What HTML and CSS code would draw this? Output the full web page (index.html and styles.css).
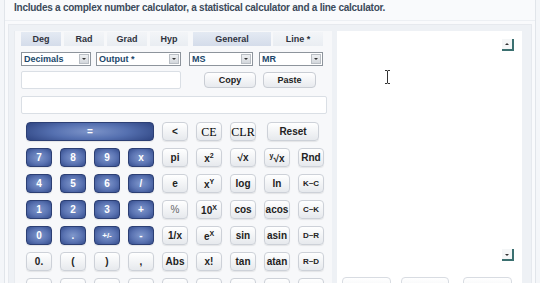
FILE: index.html
```html
<!DOCTYPE html>
<html lang="en">
<head>
  <meta charset="UTF-8">
  <title>Calculator</title>
  <link rel="stylesheet" href="styles.css">
</head>
<body>
<div class="page">
  <p class="intro">Includes a complex number calculator, a statistical calculator and a line calculator.</p>

  <div class="frame">
    <div class="calc">
      <div class="tabs">
        <span class="tab on w40">Deg</span>
        <span class="tab w40">Rad</span>
        <span class="tab w40">Grad</span>
        <span class="tab w38">Hyp</span>
        <span class="tab on general">General</span>
        <span class="tab line">Line *</span>
      </div>

      <div class="selects">
        <div class="select s-dec">Decimals<i></i></div>
        <div class="select s-out">Output *<i></i></div>
        <div class="select s-ms">MS<i></i></div>
        <div class="select s-mr">MR<i></i></div>
      </div>

      <div class="row-io">
        <div class="field small"></div>
        <button class="btn copy">Copy</button>
        <button class="btn paste">Paste</button>
      </div>

      <div class="field wide"></div>

      <div class="keys">
        <button class="key blue eq">=</button>
        <button class="key">&lt;</button>
        <button class="key serif">CE</button>
        <button class="key serif">CLR</button>
        <button class="key reset">Reset</button>

        <button class="key blue">7</button>
        <button class="key blue">8</button>
        <button class="key blue">9</button>
        <button class="key blue">x</button>
        <button class="key">pi</button>
        <button class="key">x<sup>2</sup></button>
        <button class="key">&radic;x</button>
        <button class="key"><sup>y</sup>&radic;x</button>
        <button class="key">Rnd</button>

        <button class="key blue">4</button>
        <button class="key blue">5</button>
        <button class="key blue">6</button>
        <button class="key blue">/</button>
        <button class="key">e</button>
        <button class="key">x<sup>Y</sup></button>
        <button class="key">log</button>
        <button class="key">ln</button>
        <button class="key tiny">K~C</button>

        <button class="key blue">1</button>
        <button class="key blue">2</button>
        <button class="key blue">3</button>
        <button class="key blue">+</button>
        <button class="key faint">%</button>
        <button class="key">10<sup>X</sup></button>
        <button class="key">cos</button>
        <button class="key">acos</button>
        <button class="key tiny">C~K</button>

        <button class="key blue">0</button>
        <button class="key blue">.</button>
        <button class="key blue tiny">+/-</button>
        <button class="key blue">-</button>
        <button class="key">1/x</button>
        <button class="key">e<sup>X</sup></button>
        <button class="key">sin</button>
        <button class="key">asin</button>
        <button class="key tiny">D~R</button>

        <button class="key">0.</button>
        <button class="key">(</button>
        <button class="key">)</button>
        <button class="key">,</button>
        <button class="key">Abs</button>
        <button class="key">x!</button>
        <button class="key">tan</button>
        <button class="key">atan</button>
        <button class="key tiny">R~D</button>

        <button class="key"></button>
        <button class="key"></button>
        <button class="key"></button>
        <button class="key"></button>
        <button class="key"></button>
        <button class="key"></button>
        <button class="key"></button>
        <button class="key"></button>
        <button class="key"></button>
      </div>
    </div>

    <div class="paper">
      <div class="sheet">
        <span class="scroll up"><b></b></span>
        <span class="scroll down"><b></b></span>
        <svg class="ibeam" width="7" height="14" viewBox="0 0 7 14">
          <path d="M1 0.5h2l0.5 0.5l0.5-0.5h2M3.5 1v12M1 13.5h2l0.5-0.5l0.5 0.5h2" fill="none" stroke="#333" stroke-width="1"/>
        </svg>
      </div>
      <div class="paper-btns">
        <button class="pbtn"></button>
        <button class="pbtn"></button>
        <button class="pbtn"></button>
      </div>
    </div>
  </div>
</div>
</body>
</html>
```

FILE: styles.css
```css
html {
  box-sizing: border-box;
}

*, *:before, *:after {
  box-sizing: inherit;
}

body {
  margin: 0;
  padding: 0 4px;
  background: #f4f6f9;
  font-family: "Liberation Sans", Arial, sans-serif;
  overflow: hidden;
}

.page {
  height: 283px;
  border-left: 1px solid #e1e5ea;
  border-right: 1px solid #e1e5ea;
  background: #f9fafc;
}

.intro {
  margin: 0;
  height: 21px;
  padding: 2px 0 0 9px;
  font-size: 10px;
  font-weight: bold;
  letter-spacing: -0.25px;
  color: #3c4a5b;
  border-bottom: 1px solid #eceff3;
}

.frame {
  display: flex;
  gap: 5px;
  margin: 3px 3px 0 3px;
  padding: 6px 4px 0 5px;
  background: #eef1f5;
  border: 1px solid #e6e9ee;
  border-bottom: 0;
  height: 262px;
}

.calc {
  width: 318px;
  padding: 1px 6px 0 6px;
  background: #f7f8fa;
  border-left: 1px solid #e8ebef;
  overflow: hidden;
}

/* tabs */
.tabs {
  display: flex;
  height: 14px;
}

.tab {
  font-size: 9px;
  font-weight: bold;
  color: #2f3340;
  text-align: center;
  line-height: 14px;
  margin-right: 3px;
  background: linear-gradient(#f3f5f8, #e9edf2);
}

.tab.on {
  background: linear-gradient(#e4eaf3, #d4dcea);
}

.w40 { width: 40px; }
.w38 { width: 38px; }
.tab.general { width: 78px; margin-left: 2px; margin-right: 2px; }
.tab.line { width: 50px; margin-right: 0; }

/* selects */
.selects {
  display: flex;
  margin-top: 6px;
  height: 14px;
}

.select {
  position: relative;
  height: 14px;
  border: 1px solid #8d949c;
  background: #fff;
  font-size: 9px;
  font-weight: bold;
  color: #21476b;
  line-height: 12px;
  padding-left: 2px;
}

.select i {
  position: absolute;
  right: 1px;
  top: 1px;
  width: 10px;
  height: 10px;
  background: linear-gradient(#eef0f2, #d3d7dc);
  border: 1px solid #b9bec4;
}

.select i:after {
  content: '';
  position: absolute;
  left: 2px;
  top: 3px;
  border-left: 2px solid transparent;
  border-right: 2px solid transparent;
  border-top: 2px solid #333;
}

.s-dec { width: 70px; }
.s-out { width: 85px; margin-left: 5px; }
.s-ms { width: 64px; margin-left: 8px; }
.s-mr { width: 64px; margin-left: 6px; }

/* copy / paste row */
.row-io {
  display: flex;
  align-items: center;
  margin-top: 5px;
  height: 18px;
}

.field {
  height: 18px;
  background: #fff;
  border: 1px solid #dadfe5;
  border-radius: 2px;
}

.field.small { width: 160px; }
.field.wide { width: 306px; margin-top: 7px; }

.btn {
  height: 16px;
  padding: 0;
  border: 1px solid #c9cdd4;
  border-radius: 4px;
  background: linear-gradient(#ffffff, #e7eaee);
  font-family: inherit;
  font-size: 9px;
  font-weight: bold;
  color: #222;
}

.copy { width: 52px; margin-left: 23px; }
.paste { width: 53px; margin-left: 7px; }

/* keypad */
.keys {
  display: grid;
  grid-template-columns: repeat(9, 26px);
  grid-auto-rows: 19px;
  column-gap: 8px;
  row-gap: 7px;
  margin: 8px 0 0 5px;
}

.key {
  padding: 0;
  border: 1px solid #cdd1d8;
  border-radius: 4px;
  background: linear-gradient(#ffffff, #e6e9ed);
  box-shadow: 0 1px 1px rgba(0,0,0,0.08);
  font-family: inherit;
  font-size: 10px;
  font-weight: bold;
  color: #222;
  line-height: 1;
}

.key sup {
  font-size: 7px;
  vertical-align: 4px;
}

.key.serif {
  font-family: "Liberation Serif", serif;
  font-weight: normal;
  font-size: 12px;
  color: #000;
}

.key.tiny { font-size: 8px; }
.key.faint { color: #666; font-weight: normal; }

.key.blue {
  border: 1px solid #2c3f74;
  background: radial-gradient(ellipse at center, #8098cc 0%, #5a73b2 55%, #344c8c 100%);
  color: #fff;
}

.key.eq {
  grid-column: span 4;
  background: radial-gradient(ellipse 60% 90% at center, #7d94c9 0%, #5570b0 50%, #2f4582 100%);
}

.key.reset {
  grid-column: span 2;
  margin: 0 5px 0 3px;
}

/* right paper */
.paper {
  width: 185px;
  display: flex;
  flex-direction: column;
}

.sheet {
  position: relative;
  flex: none;
  height: 240px;
  background: #fff;
}

.scroll {
  position: absolute;
  left: 165px;
  width: 12px;
  height: 12px;
  background: #f4f6f7;
  border-right: 2px solid #3b7070;
  border-bottom: 2px solid #3b7070;
}

.scroll.up { top: 8px; }
.scroll.down { top: 218px; }

.scroll b {
  position: absolute;
  left: 3px;
  border-left: 2px solid transparent;
  border-right: 2px solid transparent;
}

.scroll.up b { top: 4px; border-bottom: 2px solid #333; }
.scroll.down b { top: 5px; border-top: 2px solid #333; }

.ibeam {
  position: absolute;
  left: 47px;
  top: 39px;
}

.paper-btns {
  display: flex;
  background: #fff;
  padding: 6px 0 0 5px;
  flex: none;
}

.pbtn {
  width: 49px;
  height: 18px;
  border: 1px solid #d8dce2;
  border-radius: 4px;
  background: linear-gradient(#ffffff, #eef0f3);
  margin-right: 10px;
}

.pbtn:last-child { margin-left: 4px; }
```
